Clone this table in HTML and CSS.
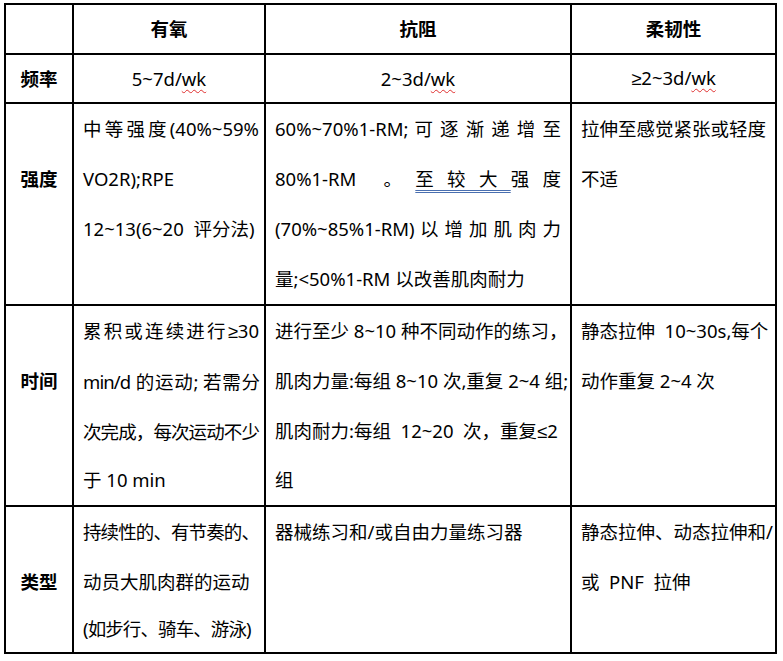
FILE: index.html
```html
<!DOCTYPE html>
<html lang="zh-CN">
<head>
<meta charset="utf-8">
<title>运动处方</title>
<link rel="stylesheet" href="styles.css">
</head>
<body>
<table class="rx">
  <colgroup>
    <col class="c-label">
    <col class="c-aero">
    <col class="c-res">
    <col class="c-flex">
  </colgroup>
  <tr class="r-head">
    <th class="corner"></th>
    <th>有氧</th>
    <th>抗阻</th>
    <th>柔韧性</th>
  </tr>
  <tr class="r-freq">
    <th class="label">频率</th>
    <td class="center">5~7d/<span class="wavy">wk</span></td>
    <td class="center">2~3d/<span class="wavy">wk</span></td>
    <td class="center"><span class="sym">≥</span>2~3d/<span class="wavy">wk</span></td>
  </tr>
  <tr class="r-int">
    <th class="label low">强度</th>
    <td class="first">
      <div class="ln j">中等强度(40%~59%</div>
      <div class="ln">VO2R);RPE</div>
      <div class="ln">12~13(6~20&nbsp; 评分法)</div>
    </td>
    <td>
      <div class="ln j">60%~70%1-RM; 可 逐 渐 递 增 至</div>
      <div class="ln j">80%1-RM&nbsp;&nbsp; 。 <span class="dbl">至 较 大 </span>强 度</div>
      <div class="ln j">(70%~85%1-RM) 以 增 加 肌 肉 力</div>
      <div class="ln">量;&lt;50%1-RM 以改善肌肉耐力</div>
    </td>
    <td>
      <div class="ln">拉伸至感觉紧张或轻度</div>
      <div class="ln">不适</div>
    </td>
  </tr>
  <tr class="r-time">
    <th class="label low">时间</th>
    <td class="first">
      <div class="ln j">累积或连续进行<span class="sym">≥</span>30</div>
      <div class="ln j tight">min/d 的运动; 若需分</div>
      <div class="ln j tight">次完成，每次运动不少</div>
      <div class="ln end">于 10 min</div>
    </td>
    <td>
      <div class="ln">进行至少 8~10 种不同动作的练习，</div>
      <div class="ln">肌肉力量:每组 8~10 次,重复 2~4 组;</div>
      <div class="ln">肌肉耐力:每组&nbsp; 12~20&nbsp; 次，重复<span class="sym">≤</span>2</div>
      <div class="ln end">组</div>
    </td>
    <td>
      <div class="ln">静态拉伸&nbsp; 10~30s,每个</div>
      <div class="ln">动作重复 2~4 次</div>
    </td>
  </tr>
  <tr class="r-type">
    <th class="label low">类型</th>
    <td class="first">
      <div class="ln tight">持续性的、有节奏的、</div>
      <div class="ln">动员大肌肉群的运动</div>
      <div class="ln tight end">(如步行、骑车、游泳)</div>
    </td>
    <td>
      <div class="ln">器械练习和/或自由力量练习器</div>
    </td>
    <td>
      <div class="ln">静态拉伸、动态拉伸和/</div>
      <div class="ln">或&nbsp; PNF&nbsp; 拉伸</div>
    </td>
  </tr>
</table>
</body>
</html>
```

FILE: styles.css
```css
html, body {
  margin: 0;
  padding: 0;
  background: #fff;
}

body {
  padding: 3px 0 0 4px;
  font-family: "Noto Sans", "Noto Sans CJK SC", sans-serif;
  color: #000;
}

.rx {
  border-collapse: collapse;
  table-layout: fixed;
  width: 771px;
  font-size: 18.5px;
}

.c-label { width: 68px; }
.c-aero { width: 192px; }
.c-res { width: 306px; }
.c-flex { width: 205px; }

.rx th,
.rx td {
  border: 2px solid #000;
  padding: 0 9px;
  vertical-align: top;
  line-height: 50px;
  text-align: left;
  font-weight: normal;
  white-space: nowrap;
  overflow: hidden;
}

.rx td.first {
  padding: 0 5px 0 9px;
}

.r-head { height: 50px; }
.r-freq { height: 49px; }
.r-int { height: 200px; }
.r-time { height: 201px; }
.r-type { height: 147px; }

.r-head th {
  font-weight: bold;
  text-align: center;
  vertical-align: middle;
  padding: 0;
  line-height: 1.2;
}

.r-freq th,
.r-freq td {
  line-height: 44px;
}

.rx th.label {
  font-weight: bold;
  text-align: center;
  padding: 0;
  vertical-align: middle;
}

.rx th.label.low {
  vertical-align: top;
  padding-top: 50px;
}

.rx td.center {
  text-align: center;
  vertical-align: middle;
  padding: 0;
}

.ln { white-space: nowrap; }

.r-time .ln.end { line-height: 46px; }
.r-type .ln.end { line-height: 44px; }

.ln.j {
  text-align: justify;
  text-align-last: justify;
}

.ln.tight {
  letter-spacing: -0.9px;
}

.sym {
  font-family: "Liberation Sans", "DejaVu Sans", sans-serif;
}

.wavy {
  text-decoration: underline wavy #e03030;
  text-decoration-thickness: 1px;
  text-underline-offset: 3px;
}

.dbl {
  text-decoration: underline double #4a6fb0;
  text-decoration-thickness: 1px;
  text-underline-offset: 4px;
}
```
